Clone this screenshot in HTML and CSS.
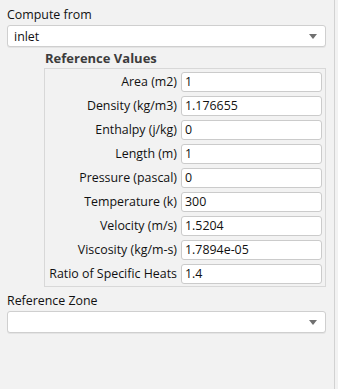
FILE: index.html
```html
<!DOCTYPE html>
<html lang="en">
<head>
    <meta charset="UTF-8">
    <meta name="viewport" content="width=device-width, initial-scale=1.0">
    <title>Reference Values</title>

    <link rel="stylesheet" href="styles.css">
</head>
<body>
    <div class="panel">
        <p class="field-label">Compute from</p>
        <div class="dropdown">
            <span>inlet</span>
            <span class="arrow"></span>
        </div>

        <div class="group">
            <p class="group-title">Reference Values</p>
            <div class="group-box">
                <label>Area (m2)</label>
                <div class="entry">1</div>
                <label>Density (kg/m3)</label>
                <div class="entry">1.176655</div>
                <label>Enthalpy (j/kg)</label>
                <div class="entry">0</div>
                <label>Length (m)</label>
                <div class="entry">1</div>
                <label>Pressure (pascal)</label>
                <div class="entry">0</div>
                <label>Temperature (k)</label>
                <div class="entry">300</div>
                <label>Velocity (m/s)</label>
                <div class="entry">1.5204</div>
                <label>Viscosity (kg/m-s)</label>
                <div class="entry">1.7894e-05</div>
                <label>Ratio of Specific Heats</label>
                <div class="entry">1.4</div>
            </div>
        </div>

        <p class="field-label zone-label">Reference Zone</p>
        <div class="dropdown">
            <span></span>
            <span class="arrow"></span>
        </div>
    </div>
</body>
</html>
```

FILE: styles.css
```css
* {
    margin: 0px;
    padding: 0px;
    box-sizing: border-box;
}

body {
    background-color: #f2f2f2;
    font-family: "Open Sans", "Noto Sans", sans-serif;
    font-size: 12.4px;
    color: #111;
}

.panel {
    width: 335px;
    height: 389px;
    padding: 7px 0 0 7px;
    border-right: 1px solid #d2d2d2;
}

.field-label {
    height: 18px;
    line-height: 16px;
}

.dropdown {
    width: 319px;
    height: 22px;
    border: 1px solid #cfcfcf;
    border-radius: 3px;
    background-color: white;
    display: flex;
    justify-content: space-between;
    align-items: center;
    padding: 0 8px 0 6px;
    box-shadow: 0 1px 0 #e4e4e4;
}

.arrow {
    width: 0;
    height: 0;
    border-left: 4px solid transparent;
    border-right: 4px solid transparent;
    border-top: 5px solid #707070;
}

.group {
    margin-left: 37px;
    margin-top: 3px;
    width: 282px;
}

.group-title {
    font-weight: bold;
    color: #3c3c3c;
    font-size: 13px;
    height: 18px;
    line-height: 16px;
    padding-left: 1px;
}

.group-box {
    border: 1px solid #d8d8d8;
    display: grid;
    grid-template-columns: 1fr 141px;
    column-gap: 4px;
    row-gap: 4px;
    padding: 3px 3px 2px 3px;
}

.group-box label {
    text-align: right;
    line-height: 20px;
    white-space: nowrap;
}

.entry {
    height: 20px;
    line-height: 18px;
    border: 1px solid #cbcbcb;
    border-radius: 3px;
    background-color: white;
    padding-left: 3px;
}

.zone-label {
    margin-top: 6px;
}
```
